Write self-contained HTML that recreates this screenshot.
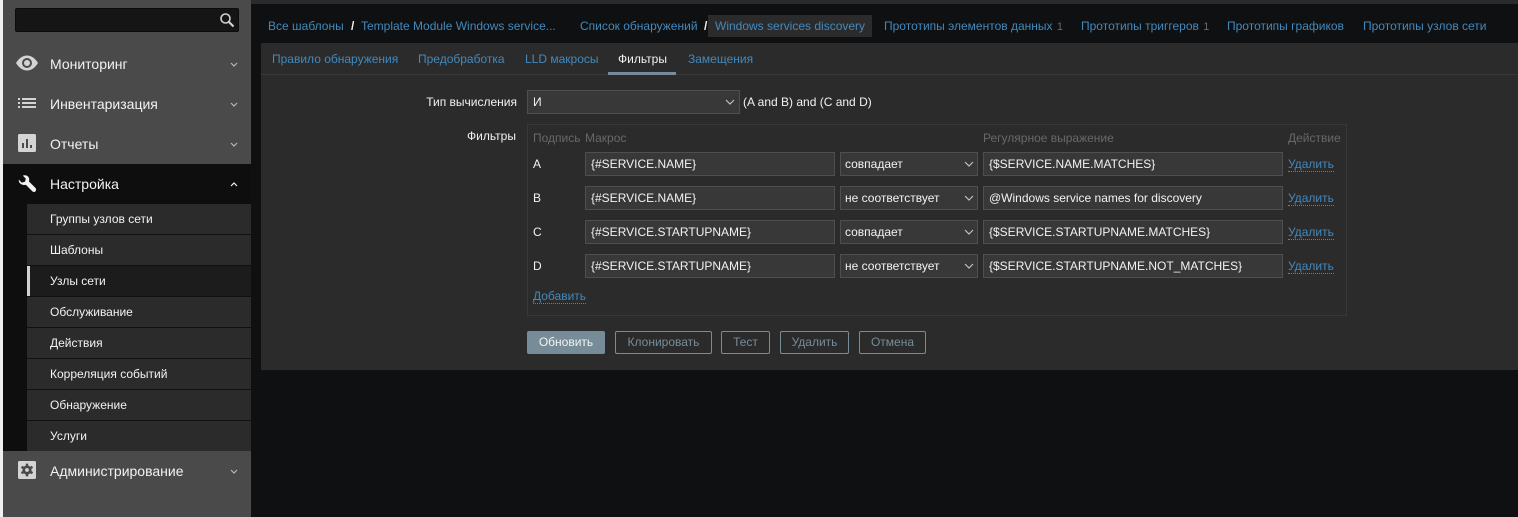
<!DOCTYPE html>
<html><head><meta charset="utf-8"><style>
html,body{margin:0;padding:0;background:#0e1012;}
body{width:1518px;height:517px;position:relative;overflow:hidden;font-family:"Liberation Sans",sans-serif;font-size:12px;color:#f2f2f2;}
.a{position:absolute;white-space:nowrap;}
.r{position:absolute;}
.l{color:#4289bd;}
.m{position:absolute;left:50px;font-size:14px;line-height:16px;color:#f2f2f2;white-space:nowrap;}
.s{position:absolute;left:27px;width:224px;height:30px;background:#2b2b2b;border-bottom:1px solid #0e1012;}
.s span{position:absolute;left:23px;top:8px;line-height:14px;color:#f2f2f2;white-space:nowrap;}
.i{position:absolute;height:24px;box-sizing:border-box;background:#383838;border:1px solid #4f4f4f;line-height:22px;padding-left:5px;color:#f2f2f2;white-space:nowrap;}
.b{position:absolute;top:331px;height:23px;box-sizing:border-box;border:1px solid #768d99;border-radius:2px;color:#768d99;text-align:center;line-height:21px;}
.d{position:absolute;left:1288px;color:#4289bd;border-bottom:1px dotted #4289bd;line-height:14px;height:14px;}
.c{position:absolute;color:#f2f2f2;font-size:12px;line-height:14px;}
.h{position:absolute;top:131px;color:#686868;line-height:14px;white-space:nowrap;}
svg{position:absolute;overflow:visible;}
</style></head><body>
<!-- page edges -->
<div class="r" style="left:0;top:0;width:3px;height:517px;background:#f0f0f0"></div>
<div class="r" style="left:3px;top:0;width:248px;height:517px;background:#4a4a4a"></div>
<div class="r" style="left:251px;top:0;width:1267px;height:4px;background:#2b2b2b"></div>

<!-- search -->
<div class="r" style="left:15px;top:8px;width:224px;height:24px;box-sizing:border-box;background:#151515;border:1px solid #0c0c0c;border-radius:2px"></div>
<svg style="left:219px;top:12px" width="16" height="16" fill="none" stroke="#d0d0d0"><circle cx="6.5" cy="6.5" r="4.5" stroke-width="1.6"/><path d="M10 10l4.5 4.5" stroke-width="2.2"/></svg>

<!-- main menu -->
<svg style="left:16px;top:55px" width="22" height="16"><path d="M0 8C3 3 7 .5 11 .5S19 3 22 8c-3 5-7 7.500-11 7.500S3 13 0 8z" fill="#d4d4d4"/><circle cx="11" cy="8" r="5" fill="#4a4a4a"/><circle cx="11" cy="8" r="3" fill="#d4d4d4"/></svg>
<div class="m" style="top:56px">Мониторинг</div>
<svg style="left:18px;top:97px" width="18" height="12" fill="#d4d4d4"><rect x="0" y="1" width="2" height="2"/><rect x="0" y="5" width="2" height="2"/><rect x="0" y="9" width="2" height="2"/><rect x="4" y="1" width="14" height="2"/><rect x="4" y="5" width="14" height="2"/><rect x="4" y="9" width="14" height="2"/></svg>
<div class="m" style="top:96px">Инвентаризация</div>
<svg style="left:18px;top:134px" width="18" height="18"><rect width="18" height="18" rx="1.500" fill="#d4d4d4"/><path d="M4 9h2v5H4zM8 5h2v9H8zM12 11h2v3h-2z" fill="#4a4a4a"/></svg>
<div class="m" style="top:136px">Отчеты</div>
<div class="r" style="left:3px;top:164px;width:248px;height:40px;background:#0e0e0e"></div>
<div class="r" style="left:3px;top:204px;width:24px;height:247px;background:#0e0e0e"></div>
<svg style="left:18px;top:175px" width="18" height="18"><path d="M.8 4.600 3.800 7.600 7 6.800 7.800 3.600 4.800 .6C7 -.3 9.600 .4 10.700 2.400 11.400 3.700 11.400 5.200 10.900 6.400L17.500 13C18.300 13.800 18.300 15.200 17.500 16.200 16.600 17.200 15.200 17.200 14.300 16.300L7.800 9.700C6 10.400 4 10 2.500 8.800 1.200 7.700.5 6 .8 4.600z" fill="#f2f2f2"/></svg>
<div class="m" style="top:176px">Настройка</div>

<!-- sub menu -->
<div class="s" style="top:204px"><span>Группы узлов сети</span></div>
<div class="s" style="top:235px"><span>Шаблоны</span></div>
<div class="s" style="top:266px;background:#1c1c1c"><span>Узлы сети</span></div>
<div class="r" style="left:27px;top:266px;width:3px;height:30px;background:#d2d2d2"></div>
<div class="s" style="top:297px"><span>Обслуживание</span></div>
<div class="s" style="top:328px"><span>Действия</span></div>
<div class="s" style="top:359px"><span>Корреляция событий</span></div>
<div class="s" style="top:390px"><span>Обнаружение</span></div>
<div class="s" style="top:421px;height:30px;border:0"><span>Услуги</span></div>
<svg style="left:18px;top:461px" width="18" height="18"><rect width="18" height="18" rx="1.500" fill="#d4d4d4"/><circle cx="9" cy="9" r="4.600" fill="#4a4a4a"/><path d="M9 2.600v12.800M3.500 5.800l11 6.400M3.500 12.200l11-6.400" stroke="#4a4a4a" stroke-width="2.400"/><circle cx="9" cy="9" r="1.900" fill="#d4d4d4"/></svg>
<div class="m" style="top:463px">Администрирование</div>
<svg style="left:230px;top:62px" width="8" height="5" fill="none" stroke="#b8b8b8" stroke-width="1.200"><path d="M1 1l3 3 3-3"/></svg>
<svg style="left:230px;top:102px" width="8" height="5" fill="none" stroke="#b8b8b8" stroke-width="1.200"><path d="M1 1l3 3 3-3"/></svg>
<svg style="left:230px;top:142px" width="8" height="5" fill="none" stroke="#b8b8b8" stroke-width="1.200"><path d="M1 1l3 3 3-3"/></svg>
<svg style="left:230px;top:182px" width="8" height="5" fill="none" stroke="#f2f2f2" stroke-width="1.200"><path d="M1 4l3-3 3 3"/></svg>
<svg style="left:230px;top:469px" width="8" height="5" fill="none" stroke="#b8b8b8" stroke-width="1.200"><path d="M1 1l3 3 3-3"/></svg>

<!-- breadcrumb -->
<div class="a l" style="left:268px;top:19px;line-height:14px">Все шаблоны</div>
<div class="a" style="left:351px;top:19px;line-height:14px;font-weight:bold">/</div>
<div class="a l" style="left:361px;top:19px;line-height:14px">Template Module Windows service...</div>
<div class="a l" style="left:580px;top:19px;line-height:14px">Список обнаружений</div>
<div class="a" style="left:704px;top:19px;line-height:14px;font-weight:bold">/</div>
<div class="r" style="left:708px;top:15px;width:164px;height:22px;background:#2b2b2b"></div>
<div class="a l" style="left:715px;top:19px;line-height:14px">Windows services discovery</div>
<div class="a l" style="left:884px;top:19px;line-height:14px">Прототипы элементов данных <span style="color:#686868;font-size:11px;margin-left:1px">1</span></div>
<div class="a l" style="left:1081px;top:19px;line-height:14px">Прототипы триггеров <span style="color:#686868;font-size:11px;margin-left:1px">1</span></div>
<div class="a l" style="left:1227px;top:19px;line-height:14px">Прототипы графиков</div>
<div class="a l" style="left:1363px;top:19px;line-height:14px">Прототипы узлов сети</div>

<!-- panel -->
<div class="r" style="left:261px;top:43px;width:1257px;height:327px;background:#2b2b2b"></div>
<div class="r" style="left:261px;top:74px;width:1257px;height:1px;background:#383838"></div>
<div class="a l" style="left:272px;top:52px;line-height:14px">Правило обнаружения</div>
<div class="a l" style="left:418px;top:52px;line-height:14px">Предобработка</div>
<div class="a l" style="left:525px;top:52px;line-height:14px">LLD макросы</div>
<div class="a" style="left:618px;top:52px;line-height:14px">Фильтры</div>
<div class="r" style="left:608px;top:72px;width:68px;height:3px;background:#768d99"></div>
<div class="a l" style="left:688px;top:52px;line-height:14px">Замещения</div>

<!-- calc type -->
<div class="a" style="right:1001px;top:95px;line-height:14px">Тип вычисления</div>
<div class="i" style="left:527px;top:90px;width:213px">И</div>
<svg style="left:725px;top:99px" width="10" height="6" fill="none" stroke="#c0c0c0" stroke-width="1.200"><path d="M1 1l4 4 4-4"/></svg>
<div class="a" style="left:743px;top:95px;line-height:14px">(A and B) and (C and D)</div>

<!-- filters -->
<div class="a" style="left:467px;top:129px;line-height:14px">Фильтры</div>
<div class="r" style="left:527px;top:124px;width:820px;height:192px;box-sizing:border-box;border:1px solid #383838"></div>
<div class="h" style="left:533px">Подпись</div>
<div class="h" style="left:585px">Макрос</div>
<div class="h" style="left:983px">Регулярное выражение</div>
<div class="h" style="left:1288px">Действие</div>

<div class="c" style="left:533px;top:157px">A</div>
<div class="i" style="left:585px;top:152px;width:250px">{#SERVICE.NAME}</div>
<div class="i" style="left:840px;top:152px;width:138px;padding-left:4px">совпадает</div>
<div class="i" style="left:983px;top:152px;width:300px">{$SERVICE.NAME.MATCHES}</div>
<div class="d" style="top:157px">Удалить</div>

<div class="c" style="left:533px;top:191px">B</div>
<div class="i" style="left:585px;top:186px;width:250px">{#SERVICE.NAME}</div>
<div class="i" style="left:840px;top:186px;width:138px;padding-left:4px">не соответствует</div>
<div class="i" style="left:983px;top:186px;width:300px">@Windows service names for discovery</div>
<div class="d" style="top:191px">Удалить</div>

<div class="c" style="left:533px;top:225px">C</div>
<div class="i" style="left:585px;top:220px;width:250px">{#SERVICE.STARTUPNAME}</div>
<div class="i" style="left:840px;top:220px;width:138px;padding-left:4px">совпадает</div>
<div class="i" style="left:983px;top:220px;width:300px">{$SERVICE.STARTUPNAME.MATCHES}</div>
<div class="d" style="top:225px">Удалить</div>

<div class="c" style="left:533px;top:259px">D</div>
<div class="i" style="left:585px;top:254px;width:250px">{#SERVICE.STARTUPNAME}</div>
<div class="i" style="left:840px;top:254px;width:138px;padding-left:4px">не соответствует</div>
<div class="i" style="left:983px;top:254px;width:300px">{$SERVICE.STARTUPNAME.NOT_MATCHES}</div>
<div class="d" style="top:259px">Удалить</div>

<svg style="left:964px;top:161px" width="10" height="6" fill="none" stroke="#c0c0c0" stroke-width="1.200"><path d="M1 1l4 4 4-4"/></svg>
<svg style="left:964px;top:195px" width="10" height="6" fill="none" stroke="#c0c0c0" stroke-width="1.200"><path d="M1 1l4 4 4-4"/></svg>
<svg style="left:964px;top:229px" width="10" height="6" fill="none" stroke="#c0c0c0" stroke-width="1.200"><path d="M1 1l4 4 4-4"/></svg>
<svg style="left:964px;top:263px" width="10" height="6" fill="none" stroke="#c0c0c0" stroke-width="1.200"><path d="M1 1l4 4 4-4"/></svg>

<div class="a l" style="left:533px;top:289px;line-height:14px;border-bottom:1px dotted #4289bd;height:14px">Добавить</div>

<!-- buttons -->
<div class="b" style="left:527px;width:78px;background:#768d99;color:#f2f2f2">Обновить</div>
<div class="b" style="left:615px;width:97px">Клонировать</div>
<div class="b" style="left:721px;width:49px">Тест</div>
<div class="b" style="left:780px;width:69px">Удалить</div>
<div class="b" style="left:859px;width:67px">Отмена</div>
</body></html>
